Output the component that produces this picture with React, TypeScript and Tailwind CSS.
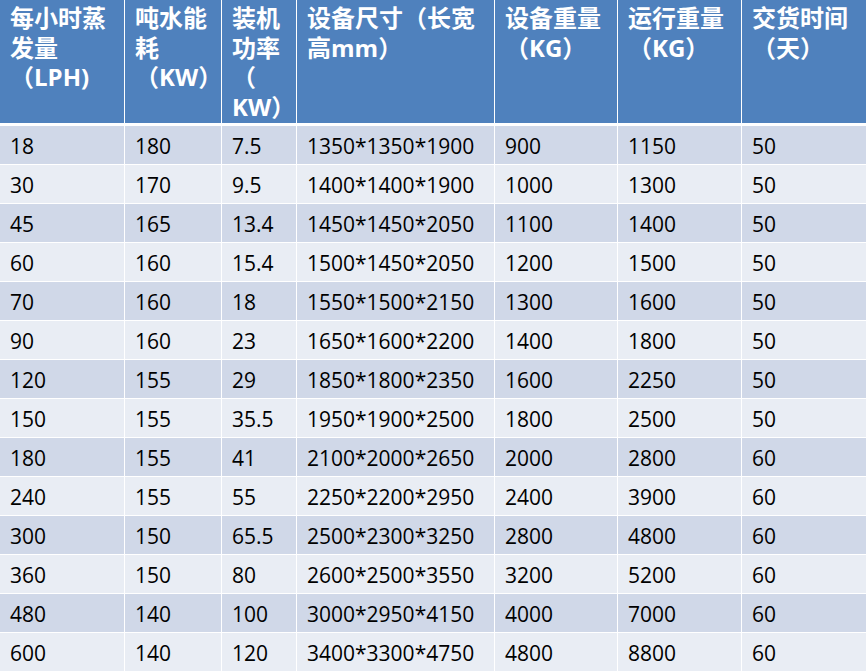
const HEADERS: string[][] = [
  ['每小时蒸', '发量', '（LPH)'],
  ['吨水能', '耗', '（KW）'],
  ['装机', '功率', '（', 'KW）'],
  ['设备尺寸（长宽', '高mm）'],
  ['设备重量', '（KG）'],
  ['运行重量', '（KG）'],
  ['交货时间', '（天）'],
];

const ROWS: string[][] = [
  ['18', '180', '7.5', '1350*1350*1900', '900', '1150', '50'],
  ['30', '170', '9.5', '1400*1400*1900', '1000', '1300', '50'],
  ['45', '165', '13.4', '1450*1450*2050', '1100', '1400', '50'],
  ['60', '160', '15.4', '1500*1450*2050', '1200', '1500', '50'],
  ['70', '160', '18', '1550*1500*2150', '1300', '1600', '50'],
  ['90', '160', '23', '1650*1600*2200', '1400', '1800', '50'],
  ['120', '155', '29', '1850*1800*2350', '1600', '2250', '50'],
  ['150', '155', '35.5', '1950*1900*2500', '1800', '2500', '50'],
  ['180', '155', '41', '2100*2000*2650', '2000', '2800', '60'],
  ['240', '155', '55', '2250*2200*2950', '2400', '3900', '60'],
  ['300', '150', '65.5', '2500*2300*3250', '2800', '4800', '60'],
  ['360', '150', '80', '2600*2500*3550', '3200', '5200', '60'],
  ['480', '140', '100', '3000*2950*4150', '4000', '7000', '60'],
  ['600', '140', '120', '3400*3300*4750', '4800', '8800', '60'],
];

export default function App() {
  return (
    <div className="w-[866px] h-[672px] overflow-hidden bg-white">
      <div className="grid grid-cols-[124px_96px_74px_197px_122px_123px_124px] gap-x-px gap-y-px">
        {HEADERS.map((lines, i) => (
          <div
            key={i}
            className="h-[123px] mb-[2px] bg-[#4f81bd] text-white pl-[10px] pt-[3px] text-[24px] leading-[29.5px] font-bold font-['Open_Sans','Noto_Sans_CJK_SC',sans-serif]"
          >
            {lines.map((l, j) => (
              <div key={j} className="whitespace-nowrap">{l}</div>
            ))}
          </div>
        ))}
        {ROWS.map((row, r) =>
          row.map((cell, c) => (
            <div
              key={`${r}-${c}`}
              className={`h-[38px] flex items-center pl-[10px] pt-[3px] text-[21px] text-black font-['Open_Sans',sans-serif] ${
                r % 2 === 0 ? 'bg-[#d0d8e8]' : 'bg-[#e9edf4]'
              }`}
            >
              {cell}
            </div>
          ))
        )}
      </div>
    </div>
  );
}
